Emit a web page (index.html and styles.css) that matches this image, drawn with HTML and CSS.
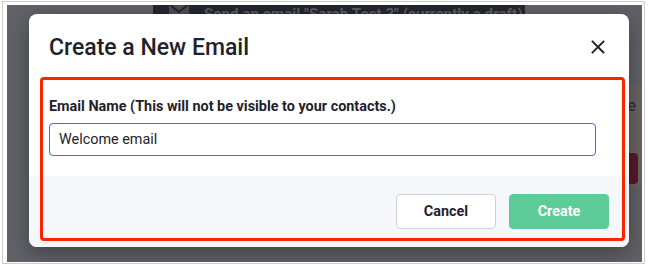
FILE: index.html
```html
<!DOCTYPE html>
<html lang="en">
<head>
<meta charset="utf-8">
<title>Create a New Email</title>
<link rel="stylesheet" href="styles.css">
</head>
<body>
<div class="shot">
  <div class="screen">
    <div class="app">
      <div class="topbar">
        <svg class="env" width="22" height="16" viewBox="0 0 22 16"><path d="M1 1h20v14H1z" fill="#4b4e56"/><path d="M1 1l10 8 10-8" fill="none" stroke="#24272e" stroke-width="2"/></svg>
        <span class="topbar-text">Send an email "Sarah Test 3" (currently a draft)</span>
      </div>
      <div class="side">
        <div class="side-text">Schedule</div>
        <div class="side-btn"></div>
      </div>
    </div>
    <div class="modal">
      <div class="modal-head">
        <h2 class="modal-title">Create a New Email</h2>
        <button class="close" aria-label="Close">
          <svg width="14" height="14" viewBox="0 0 14 14"><path d="M1.5 1.5l11 11M12.5 1.5l-11 11" stroke="#1d1f27" stroke-width="1.8" stroke-linecap="square"/></svg>
        </button>
      </div>
      <div class="modal-body">
        <label class="field-label" for="name">Email Name (This will not be visible to your contacts.)</label>
        <input id="name" class="field-input" type="text" value="Welcome email">
      </div>
      <div class="modal-foot">
        <button class="btn btn-cancel">Cancel</button>
        <button class="btn btn-create">Create</button>
      </div>
      <div class="highlight"></div>
    </div>
  </div>
</div>
</body>
</html>
```

FILE: styles.css
```css
* { box-sizing: border-box; }
html, body { margin: 0; padding: 0; background: #ffffff; }
body { font-family: Roboto, "Noto Sans", "Liberation Sans", sans-serif; }

.shot {
  margin: 1px 0 0 2px;
  width: 643px;
  height: 263px;
  border: 1px solid #cdcdcd;
  padding: 3px 1px 0 4px;
}

.screen {
  position: relative;
  width: 635px;
  height: 257px;
  overflow: hidden;
  background: #616267;
}

.app { display: flex; flex-direction: column; }

.topbar {
  margin-left: 146px;
  width: 372px;
  height: 22px;
  background: #24272e;
  display: flex;
  align-items: flex-start;
  gap: 14px;
  padding: 0 0 0 15px;
}
.env { margin-top: -2px; flex: none; }
.topbar-text {
  font-size: 15.2px;
  font-weight: 700;
  color: #5a5d64;
  line-height: 18px;
  white-space: nowrap;
}

.side {
  align-self: flex-end;
  margin-top: 58px;
  width: 70px;
  height: 102px;
  background: #6a6462;
  display: flex;
  flex-direction: column;
  align-items: flex-end;
  padding: 12px 6px 0 0;
}
.side-text { font-size: 16px; color: #2c2a2c; line-height: 18px; }
.side-btn {
  margin-top: 38px;
  margin-right: -2px;
  width: 50px;
  height: 31px;
  border-radius: 4px;
  background: #57192a;
}

.modal {
  position: absolute;
  left: 22px;
  top: 9px;
  width: 600px;
  background: #ffffff;
  border-radius: 8px;
  box-shadow: 0 6px 22px rgba(0, 0, 0, 0.35);
}

.modal-head {
  display: flex;
  align-items: center;
  justify-content: space-between;
  padding: 8px 24px 0 20px;
  height: 62px;
}
.modal-title {
  margin: 0;
  font-size: 23px;
  font-weight: 500;
  color: #1f222c;
  line-height: 30px;
  padding-bottom: 2px;
}
.close {
  border: 0;
  background: none;
  padding: 0;
  width: 14px;
  height: 14px;
  margin-bottom: 5px;
  display: flex;
}

.modal-body {
  padding: 22px 33px 20px 20px;
  display: flex;
  flex-direction: column;
}
.field-label {
  font-size: 14.4px;
  font-weight: 700;
  color: #1f222c;
  line-height: 18px;
  margin-bottom: 7px;
}
.field-input {
  height: 33px;
  border: 1px solid #4169f2;
  border-radius: 4px;
  padding: 0 9px;
  font-family: inherit;
  font-size: 14.4px;
  color: #1f222c;
  outline: none;
}

.modal-foot {
  background: #f6f7fb;
  border-radius: 0 0 8px 8px;
  display: flex;
  justify-content: flex-end;
  gap: 13px;
  padding: 18px 20px 18px 20px;
}
.btn {
  width: 100px;
  height: 35px;
  border-radius: 4px;
  font-family: inherit;
  font-size: 14.4px;
  font-weight: 700;
}
.btn-cancel { background: #ffffff; border: 1px solid #cdd1de; color: #1f222c; }
.btn-create { background: #5dcb97; border: 1px solid #5dcb97; color: #ffffff; }

.highlight {
  position: absolute;
  left: 11px;
  top: 63px;
  width: 585px;
  height: 164px;
  border: 3px solid #fa2500;
  border-radius: 4px;
  pointer-events: none;
}
```
